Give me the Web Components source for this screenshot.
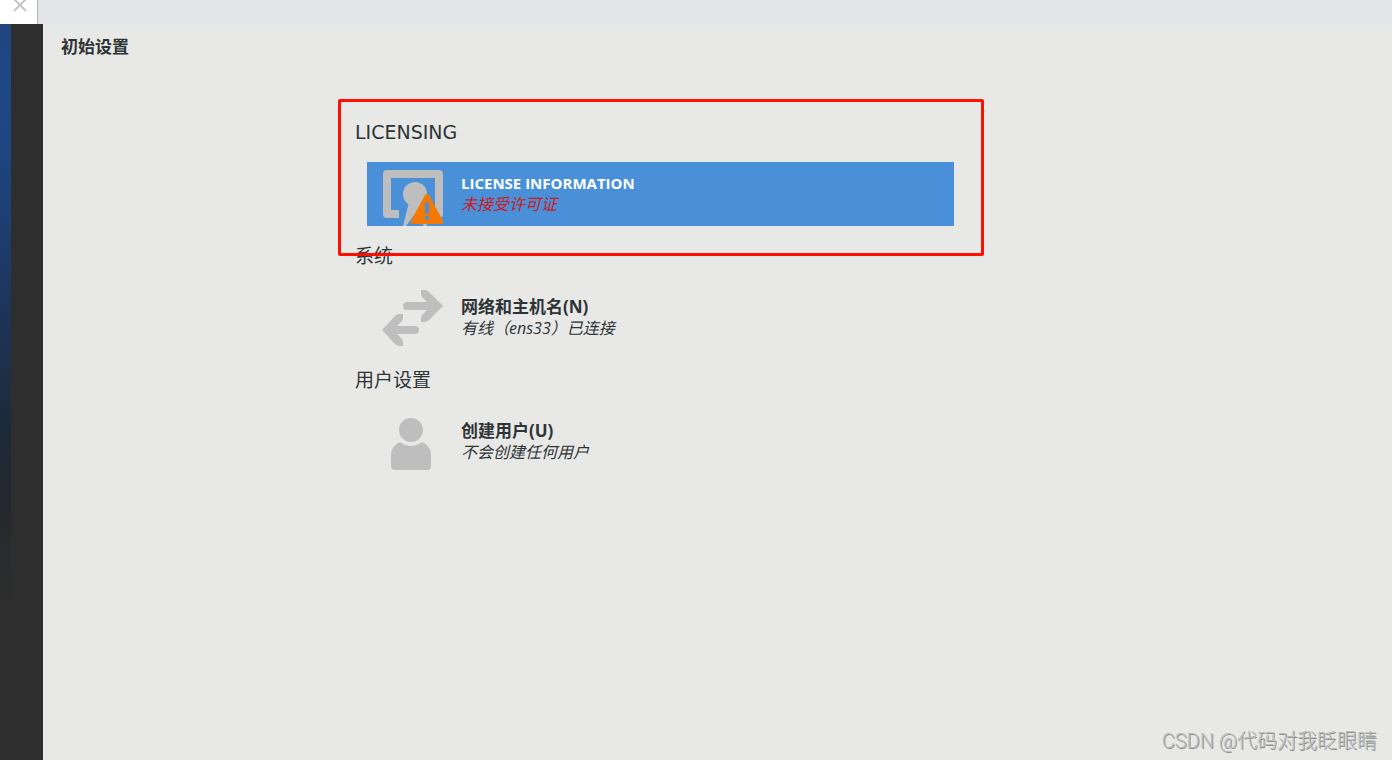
<!DOCTYPE html>
<html lang="zh-CN">
<head>
  <meta charset="UTF-8">
  <meta name="viewport" content="width=device-width, initial-scale=1.0">
  <title>初始设置</title>
  <style>
    body {
      margin: 0;
      background: #e8e8e6;
      color: #2e3436;
      font-family: "Open Sans", "Noto Sans CJK SC", sans-serif;
    }
  </style>
</head>
<body>
  <setup-window>
    <tab-strip slot="tabs"></tab-strip>
    <span slot="title">初始设置</span>
    <hub-section heading="LICENSING">
      <hub-spoke selected icon="license">
        LICENSE INFORMATION
        <span slot="status">未接受许可证</span>
      </hub-spoke>
    </hub-section>
    <hub-section heading="系统">
      <hub-spoke icon="network">
        网络和主机名(N)
        <span slot="status">有线（ens33）已连接</span>
      </hub-spoke>
    </hub-section>
    <hub-section heading="用户设置">
      <hub-spoke icon="user">
        创建用户(U)
        <span slot="status">不会创建任何用户</span>
      </hub-spoke>
    </hub-section>
    <water-mark slot="mark">CSDN @代码对我眨眼睛</water-mark>
  </setup-window>

  <script>
    const icons = {
      license: `
        <path fill="#bebebe" d="M6 8h52q4 0 4 4v40q0 4-4 4H50V48h4V16H10v32h8v8H6q-4 0-4-4V12q0-4 4-4z"/>
        <circle cx="34" cy="32" r="12" fill="#bebebe"/>
        <path fill="#bebebe" d="M28 40L22 64h3l9-12 9 12h3l-6-24z"/>
        <path fill="#f57900" d="M44 33q2-2 4 0l14 26q1 3-2 3H32q-3 0-2-3z"/>
        <rect x="44" y="40" width="4" height="12" rx="2" fill="#4a90d9"/>
        <rect x="44" y="54" width="4" height="4" rx="1" fill="#4a90d9"/>`,
      network: `
        <path fill="#bebebe" d="M40 4h4q2 0 4 2l14 14-14 14q-2 2-4 2h-4v-4q0-2 2-4l4-4H26a4 4 0 0 1 0-8h20l-4-4q-2-2-2-4zM22 28h-4q-2 0-4 2L1 44l13 14q2 2 4 2h4v-4q0-2-2-4l-4-4h18a4 4 0 0 0 0-8H16l4-4q2-2 2-4z"/>`,
      user: `
        <circle cx="30" cy="20" r="12" fill="#bebebe"/>
        <path fill="#bebebe" d="M19 32q11 8 22 0 9 4 9 13v11q0 4-4 4H14q-4 0-4-4V45q0-9 9-13z"/>`
    };

    // Window frame: tab strip, side bar and the hub itself
    class SetupWindow extends HTMLElement {
      constructor() {
        super();
        this.attachShadow({ mode: 'open' });
        this.shadowRoot.innerHTML = `
          <style>
            :host {
              display: flex;
              flex-direction: column;
              min-height: 100vh;
            }
            .body {
              display: flex;
              flex: 1;
            }
            aside {
              flex: none;
              width: 43px;
              background: #2e2e2e;
            }
            .glow {
              width: 11px;
              height: 600px;
              background: linear-gradient(#1f4580, #1f4986 10%, #1e4581 22%, #1d3b69 38%, #1e304b 56%, #1d2a38 68%, #25282f 80%, #2b2c2d 90%, #2e2e2e);
            }
            main {
              flex: 1;
              display: flex;
              flex-direction: column;
            }
            h1 {
              margin: 0;
              padding: 11px 18px 9px;
              font-size: 17px;
              line-height: 24px;
              font-weight: 700;
            }
            .hub {
              position: relative;
              display: flex;
              flex-direction: column;
              gap: 18px;
              max-width: 599px;
              margin: 52px 29px 0 312px;
            }
            /* highlight drawn over the first section */
            .frame {
              position: absolute;
              inset: -21px -30px auto -17px;
              height: 151px;
              border: 3px solid #ff0f00;
              border-radius: 2px;
              pointer-events: none;
            }
            footer {
              display: flex;
              justify-content: flex-end;
              margin-top: auto;
              padding: 0 15px 4px;
            }
          </style>
          <slot name="tabs"></slot>
          <div class="body">
            <aside><div class="glow"></div></aside>
            <main>
              <h1><slot name="title"></slot></h1>
              <div class="hub">
                <slot></slot>
                <div class="frame"></div>
              </div>
              <footer><slot name="mark"></slot></footer>
            </main>
          </div>
        `;
      }
    }

    class TabStrip extends HTMLElement {
      constructor() {
        super();
        this.attachShadow({ mode: 'open' });
        this.shadowRoot.innerHTML = `
          <style>
            :host {
              display: flex;
              height: 24px;
              background: #e3e4e7;
            }
            button {
              display: flex;
              justify-content: flex-end;
              width: 38px;
              padding: 0 9px 0 0;
              border: none;
              border-right: 1px solid #b4b4b6;
              background: #fff;
              overflow: hidden;
            }
          </style>
          <button aria-label="关闭">
            <svg width="16" height="14" viewBox="0 0 16 14">
              <path d="M2-1l12 12M14-1L2 11" stroke="#c6c6c6" stroke-width="2" fill="none"/>
            </svg>
          </button>
        `;
      }
    }

    class HubSection extends HTMLElement {
      connectedCallback() {
        this.attachShadow({ mode: 'open' });
        this.shadowRoot.innerHTML = `
          <style>
            :host {
              display: flex;
              flex-direction: column;
              gap: 18px;
            }
            h2 {
              margin: 0;
              font: 400 19px/24px "DejaVu Sans", "Noto Sans CJK SC", sans-serif;
            }
            div {
              padding-left: 12px;
            }
          </style>
          <h2>${this.getAttribute('heading')}</h2>
          <div><slot></slot></div>
        `;
      }
    }

    // One clickable entry of the hub
    class HubSpoke extends HTMLElement {
      connectedCallback() {
        this.attachShadow({ mode: 'open' });
        this.shadowRoot.innerHTML = `
          <style>
            :host {
              display: block;
            }
            button {
              display: flex;
              align-items: center;
              gap: 16px;
              width: 100%;
              height: 64px;
              padding: 0 14px;
              border: none;
              background: none;
              color: inherit;
              font-family: inherit;
              text-align: left;
            }
            :host([selected]) button {
              background: #4a90d9;
              color: #fff;
            }
            svg {
              flex: none;
            }
            .text {
              display: flex;
              flex-direction: column;
              padding-bottom: 2px;
            }
            .name {
              font-size: 17px;
              line-height: 22px;
              font-weight: 700;
            }
            :host([selected]) .name {
              font-size: 15px;
            }
            .status {
              font-size: 16px;
              line-height: 20px;
              font-style: italic;
            }
            :host([selected]) .status {
              color: #cc1a1a;
            }
          </style>
          <button>
            <svg width="64" height="64" viewBox="0 0 64 64">${icons[this.getAttribute('icon')]}</svg>
            <span class="text">
              <span class="name"><slot></slot></span>
              <span class="status"><slot name="status"></slot></span>
            </span>
          </button>
        `;
      }
    }

    class WaterMark extends HTMLElement {
      constructor() {
        super();
        this.attachShadow({ mode: 'open' });
        this.shadowRoot.innerHTML = `
          <style>
            :host {
              display: block;
              color: #bcbcbb;
              font: 300 20px/30px Roboto, "Noto Sans CJK SC", sans-serif;
              text-shadow: 1px 1px 0 #8f8f8e;
            }
          </style>
          <slot></slot>
        `;
      }
    }

    customElements.define('setup-window', SetupWindow);
    customElements.define('tab-strip', TabStrip);
    customElements.define('hub-section', HubSection);
    customElements.define('hub-spoke', HubSpoke);
    customElements.define('water-mark', WaterMark);
  </script>
</body>
</html>
